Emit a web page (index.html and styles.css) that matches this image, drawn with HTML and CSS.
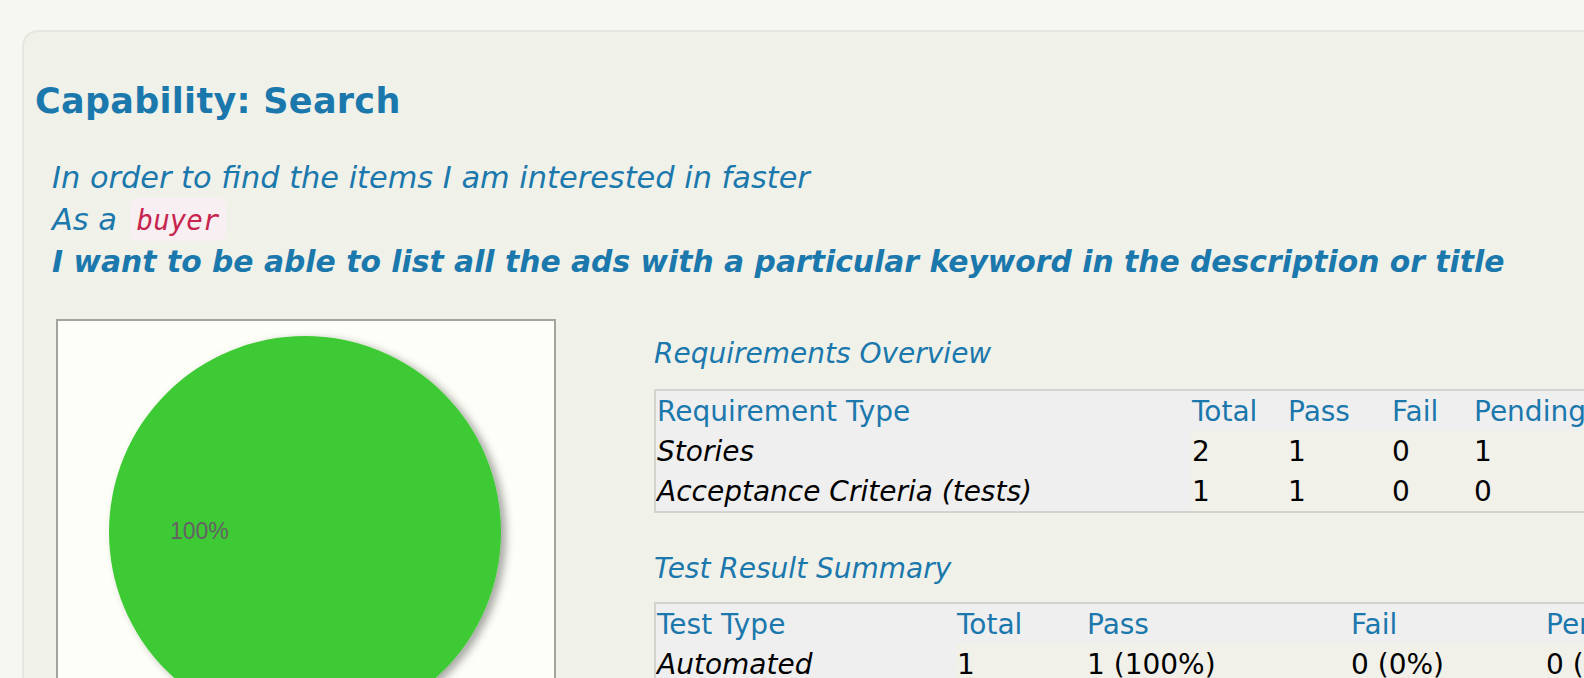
FILE: index.html
```html
<!DOCTYPE html>
<html>
<head>
<meta charset="utf-8">
<title>Capability: Search</title>
<link rel="stylesheet" href="styles.css">
</head>
<body>
<div class="card">
  <h2 class="title">Capability: Search</h2>
  <div class="narrative">
    <div class="line">In order to find the items I am interested in faster</div>
    <div class="line">As a <code class="role">buyer</code></div>
    <div class="line strong">I want to be able to list all the ads with a particular keyword in the description or title</div>
  </div>
  <div class="summary">
    <div class="chart">
      <svg class="pie" width="496" height="420" viewBox="0 0 496 420">
        <defs>
          <filter id="shadow" x="-10%" y="-10%" width="130%" height="130%">
            <feDropShadow dx="5" dy="3" stdDeviation="4" flood-color="#000" flood-opacity="0.35"/>
          </filter>
        </defs>
        <circle cx="247" cy="211" r="196" fill="#3dca34" filter="url(#shadow)"/>
        <text x="112" y="218" class="pie-label">100%</text>
      </svg>
    </div>
    <div class="stats">
      <h3 class="stats-title">Requirements Overview</h3>
      <table class="grid req">
        <colgroup><col class="c1"><col class="c2"><col class="c3"><col class="c4"><col class="c5"></colgroup>
        <tr class="head"><th>Requirement Type</th><th>Total</th><th>Pass</th><th>Fail</th><th>Pending</th></tr>
        <tr><td class="label">Stories</td><td>2</td><td>1</td><td>0</td><td>1</td></tr>
        <tr><td class="label">Acceptance Criteria (tests)</td><td>1</td><td>1</td><td>0</td><td>0</td></tr>
      </table>
      <h3 class="stats-title second">Test Result Summary</h3>
      <table class="grid tests">
        <colgroup><col class="c1"><col class="c2"><col class="c3"><col class="c4"><col class="c5"></colgroup>
        <tr class="head"><th>Test Type</th><th>Total</th><th>Pass</th><th>Fail</th><th>Pending</th></tr>
        <tr><td class="label">Automated</td><td>1</td><td>1 (100%)</td><td>0 (0%)</td><td>0 (0%)</td></tr>
      </table>
    </div>
  </div>
</div>
</body>
</html>
```
FILE: styles.css
```css
html, body {
  margin: 0;
  padding: 0;
  overflow: hidden;
  background: #f6f7f2;
}
body {
  font-family: "DejaVu Sans", Verdana, sans-serif;
  color: #000;
}
.card {
  margin: 30px 0 0 22px;
  width: 1700px;
  min-height: 900px;
  box-sizing: border-box;
  border: 2px solid #e5e6e0;
  border-radius: 16px;
  background: #f0f1e9;
  padding: 48px 12px 0 11px;
}
.title {
  margin: 0;
  font-size: 35px;
  letter-spacing: 0.3px;
  line-height: 42px;
  font-weight: bold;
  color: #1b78ad;
}
.narrative {
  margin: 35px 0 0 17px;
  font-size: 30.4px;
  line-height: 42px;
  font-style: italic;
  color: #1b78ad;
}
.narrative .strong {
  font-weight: bold;
  font-size: 29.8px;
}
.role {
  font-family: "DejaVu Sans Mono", monospace;
  font-size: 27.5px;
  font-style: italic;
  color: #c7254e;
  background: #f7eff2;
  border-radius: 7px;
  padding: 6px 7px 5px;
  margin-left: 3px;
}
.summary {
  display: flex;
  margin: 36px 0 0 21px;
  gap: 98px;
}
.chart {
  width: 496px;
  height: 420px;
  flex: none;
  border: 2px solid #a3a3a0;
  background: #fefef8;
}
.pie {
  display: block;
}
.pie-label {
  font-family: "Liberation Sans", Arial, sans-serif;
  font-size: 23px;
  fill: #666066;
}
.stats {
  flex: none;
  width: 1000px;
}
.stats-title {
  margin: 17px 0 0 0;
  font-size: 28px;
  line-height: 36px;
  font-weight: normal;
  font-style: italic;
  color: #1b78ad;
}
.stats-title.second {
  margin-top: 38px;
}
.grid {
  margin-top: 17px;
  border-collapse: separate;
  border-spacing: 0;
  border: 2px solid #d3d3d0;
  font-size: 28px;
  table-layout: fixed;
}
.grid.tests {
  margin-top: 15px;
}
.grid th, .grid td {
  padding: 0 0 0 1px;
  height: 40px;
  text-align: left;
  vertical-align: middle;
  white-space: nowrap;
  overflow: hidden;
}
.grid th {
  font-weight: normal;
  color: #1b78ad;
  background: #efefef;
}
.grid td {
  background: #f1f1e9;
}
.grid td.label {
  font-style: italic;
  background: #efefef;
}
.req { width: 1000px; }
.req .c1 { width: 535px; }
.req .c2 { width: 96px; }
.req .c3 { width: 104px; }
.req .c4 { width: 82px; }
.tests { width: 1000px; }
.tests .c1 { width: 300px; }
.tests .c2 { width: 130px; }
.tests .c3 { width: 264px; }
.tests .c4 { width: 195px; }
```
